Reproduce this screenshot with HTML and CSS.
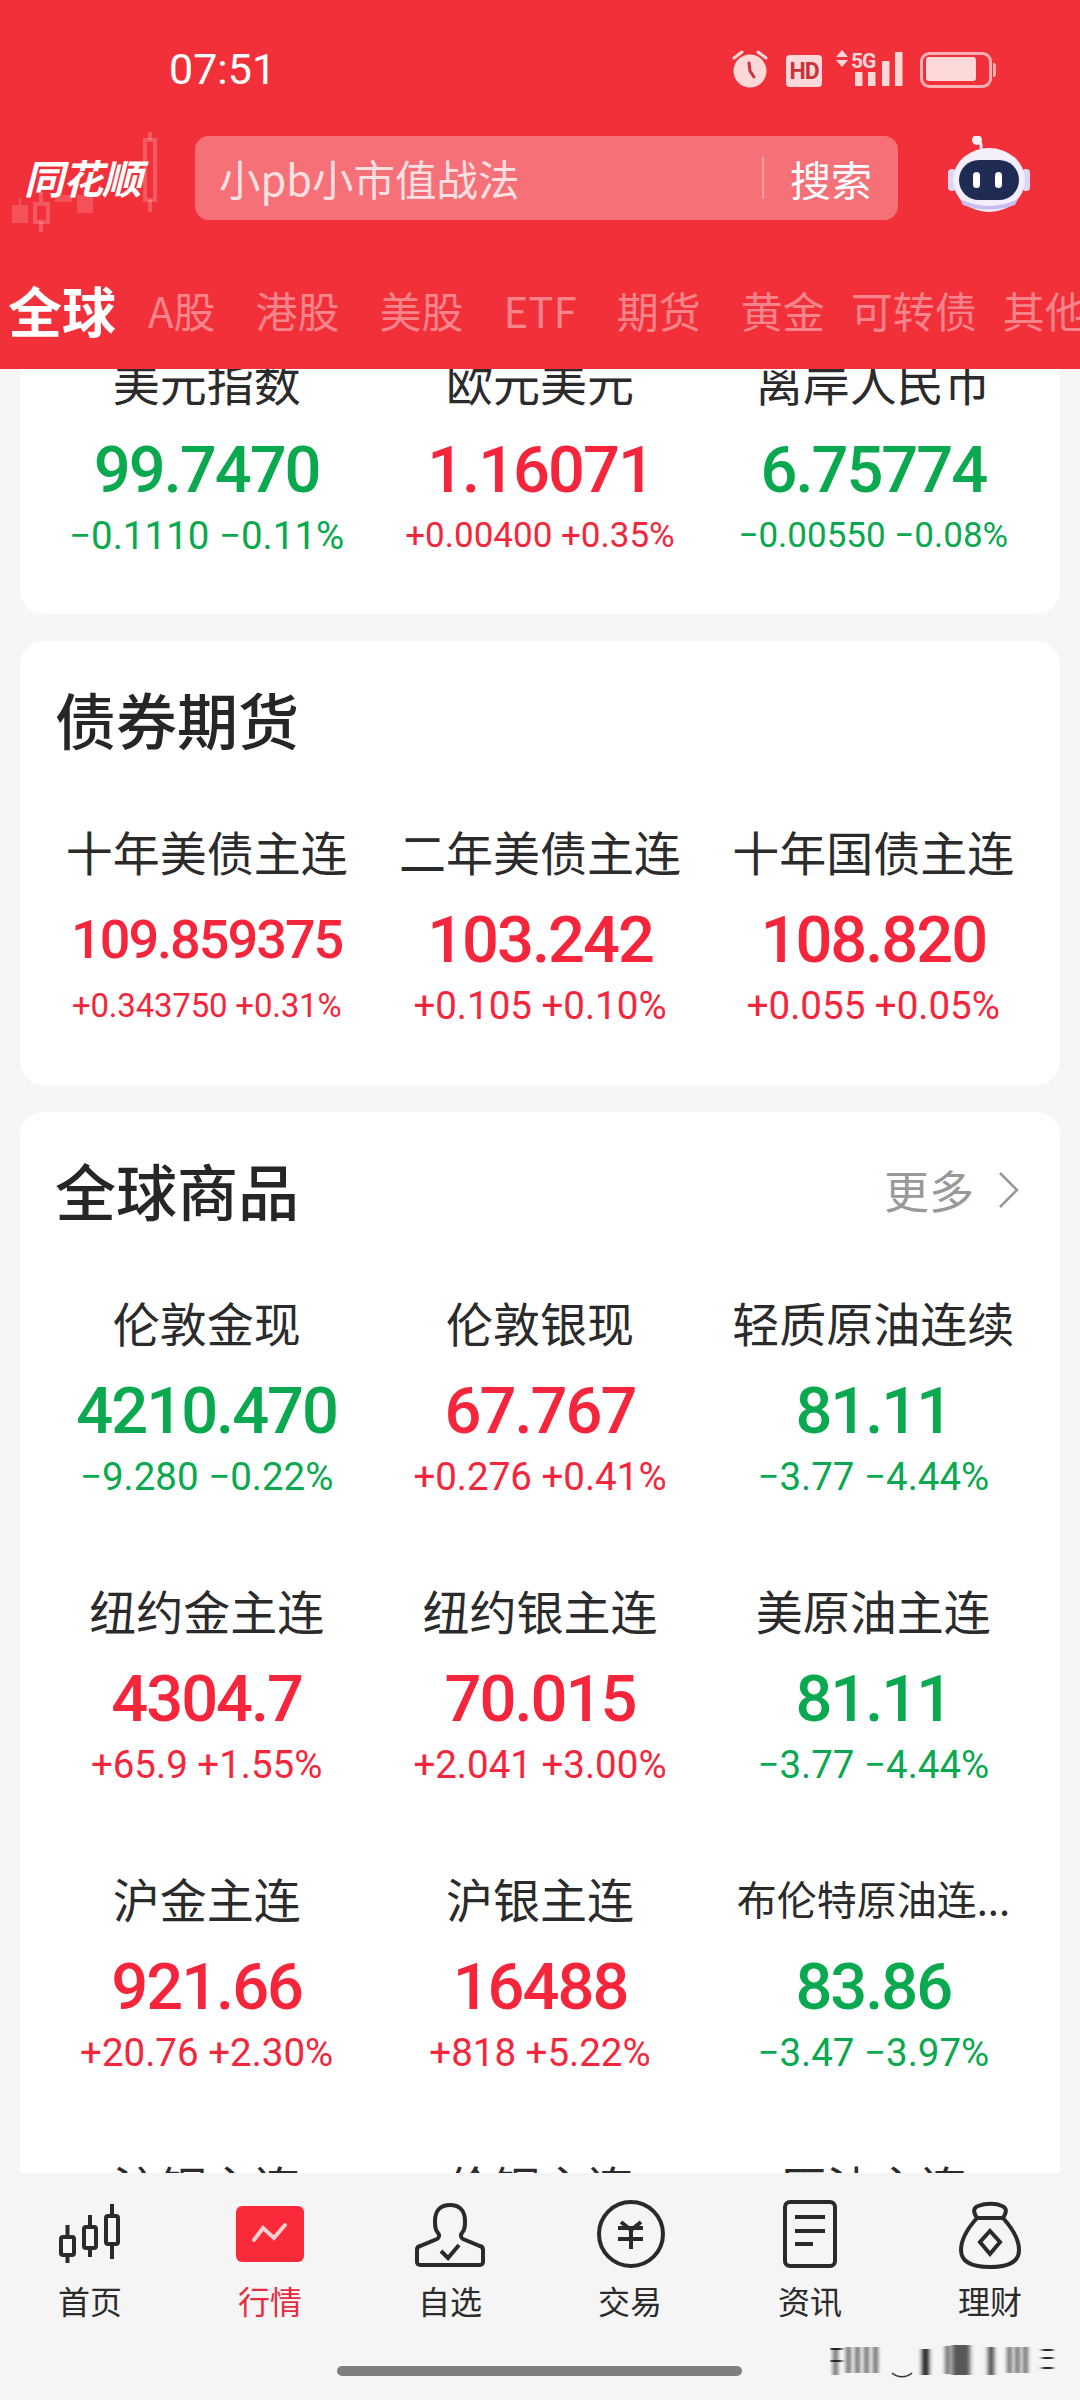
FILE: index.html
```html
<!DOCTYPE html>
<html lang="zh-CN">
<head>
<meta charset="utf-8">
<title>行情</title>
<link rel="stylesheet" href="styles.css">
</head>
<body>
<div class="app">
  <header class="header">
    <div class="status">
      <span class="time">07:51</span>
      <svg class="status-icons" viewBox="732 48 266 42" width="266" height="42">
        <g fill="none" stroke="#fdd8d8" stroke-width="3" stroke-linecap="round"><path d="M734 58l8-6M766 58l-8-6"/></g>
        <circle cx="750" cy="71" r="16.5" fill="#fdd8d8"/>
        <path d="M749 63l1 8 4 6" fill="none" stroke="#c9333b" stroke-width="3" stroke-linecap="round"/>
        <rect x="786" y="55" width="36" height="32" rx="4" fill="#fdd8d8"/>
        <text x="804" y="79" class="hd">HD</text>
        <path d="M842 50l6 7h-12zM842 67l6-7h-12z" fill="#fdd8d8"/>
        <text x="851" y="68" class="fiveg">5G</text>
        <g fill="#fdd8d8"><rect x="855" y="72" width="7.5" height="14" rx="1"/><rect x="868" y="72" width="7.5" height="14" rx="1"/><rect x="882" y="61" width="7.5" height="25" rx="1"/><rect x="895" y="52" width="7.5" height="34" rx="1"/></g>
        <rect x="921.5" y="53.5" width="69" height="33" rx="8" fill="none" stroke="#fbb0b4" stroke-width="3"/>
        <rect x="926" y="57" width="50" height="24" rx="3" fill="#fdd8d8"/>
        <path d="M993 63a3 3 0 0 1 3 3v8a3 3 0 0 1-3 3z" fill="#fbb0b4"/>
      </svg>
    </div>
    <div class="searchrow">
      <div class="logo">
        <svg class="logo-bg" viewBox="0 0 170 110" width="170" height="110">
          <g fill="#fff" fill-opacity=".16"><rect x="12" y="75" width="16" height="18"/><rect x="55" y="65" width="17" height="7"/><rect x="77" y="65" width="16" height="18"/><rect x="19" y="68" width="2" height="8"/></g>
          <g fill="none" stroke="#fff" stroke-opacity=".2" stroke-width="4"><rect x="35" y="74" width="13" height="18"/><path d="M41 62v10M41 92v10"/><rect x="145" y="10" width="10" height="60"/><path d="M150 2v8M150 70v12"/></g>
        </svg>
        <span class="logo-text">同花顺</span>
      </div>
      <div class="search">
        <span class="search-hint">小pb小市值战法</span>
        <span class="search-btn">搜索</span>
      </div>
      <svg class="robot" viewBox="945 137 90 84" width="90" height="84">
        <path d="M981 150c1-5-1-8-5-9" fill="none" stroke="#f0e8f4" stroke-width="3"/>
        <circle cx="977" cy="141" r="5" fill="#f6eef6"/>
        <rect x="948" y="170" width="8" height="22" rx="4" fill="#dcd6f2"/>
        <rect x="1022" y="170" width="8" height="22" rx="4" fill="#dcd6f2"/>
        <ellipse cx="989" cy="181" rx="36" ry="32" fill="#f2eefa"/>
        <path d="M960 200q29 14 58 0l-3 6q-26 9-52 0z" fill="#c9bdf0"/>
        <rect x="959" y="161" width="60" height="40" rx="20" fill="#1f2b52"/>
        <rect x="973" y="173" width="7" height="16" rx="3.5" fill="#fff"/>
        <rect x="995" y="173" width="7" height="16" rx="3.5" fill="#fff"/>
      </svg>
    </div>
    <nav class="tabs">
      <span class="tab tab--on">全球</span>
      <span class="tab">A股</span>
      <span class="tab">港股</span>
      <span class="tab">美股</span>
      <span class="tab">ETF</span>
      <span class="tab">期货</span>
      <span class="tab">黄金</span>
      <span class="tab tab--tight">可转债</span>
      <span class="tab tab--tight">其他</span>
    </nav>
  </header>

  <main class="main">
    <section class="card card--first">
      <div class="grid">
        <div class="cell"><div class="name">美元指数</div><div class="val down">99.7470</div><div class="chg down">−0.1110 −0.11%</div></div>
        <div class="cell"><div class="name">欧元美元</div><div class="val up">1.16071</div><div class="chg chg--md up">+0.00400 +0.35%</div></div>
        <div class="cell"><div class="name">离岸人民币</div><div class="val down">6.75774</div><div class="chg chg--md down">−0.00550 −0.08%</div></div>
      </div>
    </section>

    <section class="card">
      <div class="head"><h2 class="title">债券期货</h2></div>
      <div class="grid">
        <div class="cell"><div class="name">十年美债主连</div><div class="val val--sm up">109.859375</div><div class="chg chg--sm up">+0.343750 +0.31%</div></div>
        <div class="cell"><div class="name">二年美债主连</div><div class="val up">103.242</div><div class="chg up">+0.105 +0.10%</div></div>
        <div class="cell"><div class="name">十年国债主连</div><div class="val up">108.820</div><div class="chg up">+0.055 +0.05%</div></div>
      </div>
    </section>

    <section class="card">
      <div class="head">
        <h2 class="title">全球商品</h2>
        <span class="more">更多<svg class="chev" viewBox="0 0 22 38" width="22" height="38"><path d="M2 2l17 17L2 36" fill="none" stroke="#999" stroke-width="2.6"/></svg></span>
      </div>
      <div class="grid">
        <div class="cell"><div class="name">伦敦金现</div><div class="val down">4210.470</div><div class="chg down">−9.280 −0.22%</div></div>
        <div class="cell"><div class="name">伦敦银现</div><div class="val up">67.767</div><div class="chg up">+0.276 +0.41%</div></div>
        <div class="cell"><div class="name">轻质原油连续</div><div class="val down">81.11</div><div class="chg down">−3.77 −4.44%</div></div>
        <div class="cell"><div class="name">纽约金主连</div><div class="val up">4304.7</div><div class="chg up">+65.9 +1.55%</div></div>
        <div class="cell"><div class="name">纽约银主连</div><div class="val up">70.015</div><div class="chg up">+2.041 +3.00%</div></div>
        <div class="cell"><div class="name">美原油主连</div><div class="val down">81.11</div><div class="chg down">−3.77 −4.44%</div></div>
        <div class="cell"><div class="name">沪金主连</div><div class="val up">921.66</div><div class="chg up">+20.76 +2.30%</div></div>
        <div class="cell"><div class="name">沪银主连</div><div class="val up">16488</div><div class="chg up">+818 +5.22%</div></div>
        <div class="cell"><div class="name name--sm">布伦特原油连...</div><div class="val down">83.86</div><div class="chg down">−3.47 −3.97%</div></div>
        <div class="cell"><div class="name">沪铜主连</div></div>
        <div class="cell"><div class="name">伦铜主连</div></div>
        <div class="cell"><div class="name">原油主连</div></div>
      </div>
    </section>
  </main>

  <footer class="nav">
    <div class="nav-item">
      <svg class="nav-icon" viewBox="0 0 80 72" width="80" height="72"><g fill="none" stroke="#2a2a2a" stroke-width="4"><rect x="11" y="37" width="13" height="18" rx="2"/><path d="M17.5 25v12M17.5 55v8"/><rect x="34" y="27" width="12" height="21" rx="2"/><path d="M40 15v12M40 48v9"/><rect x="56" y="16" width="12" height="28" rx="2"/><path d="M62 4v12M62 44v15"/></g></svg>
      <span class="nav-label">首页</span>
    </div>
    <div class="nav-item nav-item--on">
      <svg class="nav-icon" viewBox="0 0 80 72" width="80" height="72"><rect x="6" y="6" width="68" height="56" rx="6" fill="#fb2a3b"/><path d="M24 40l9-12 11 10 11-13" fill="none" stroke="#fbd0d0" stroke-width="4" stroke-linecap="round"/></svg>
      <span class="nav-label">行情</span>
    </div>
    <div class="nav-item">
      <svg class="nav-icon" viewBox="0 0 80 72" width="80" height="72"><path d="M10 65H70a3 3 0 0 0 3-3V50a4 4 0 0 0-3-4L53 39c-2-1-3-4-1-6c3-3 3-7 3-12C55 10 49 5 40 5S25 10 25 21c0 5 0 9 3 12c2 2 1 5-1 6L10 46a4 4 0 0 0-3 4V62a3 3 0 0 0 3 3Z" fill="none" stroke="#2a2a2a" stroke-width="4"/><path d="M31 51l7 7 11-13" fill="none" stroke="#2a2a2a" stroke-width="4"/></svg>
      <span class="nav-label">自选</span>
    </div>
    <div class="nav-item">
      <svg class="nav-icon" viewBox="0 0 80 72" width="80" height="72"><circle cx="41" cy="34" r="32" fill="none" stroke="#2a2a2a" stroke-width="4"/><path d="M31 22l10 8 10-8M28 28h25M28 39h25M41 30v19" fill="none" stroke="#2a2a2a" stroke-width="4"/></svg>
      <span class="nav-label">交易</span>
    </div>
    <div class="nav-item">
      <svg class="nav-icon" viewBox="0 0 80 72" width="80" height="72"><rect x="15" y="2" width="50" height="64" rx="5" fill="none" stroke="#2a2a2a" stroke-width="4"/><path d="M25 17h30M25 31h30M25 44h18" fill="none" stroke="#2a2a2a" stroke-width="4"/></svg>
      <span class="nav-label">资讯</span>
    </div>
    <div class="nav-item">
      <svg class="nav-icon" viewBox="0 0 80 72" width="80" height="72"><path d="M27 18C18 28 11 38 11 50C11 62 22 67 40 67S69 62 69 50C69 38 62 28 53 18ZM27 18C23 12 23 8 28 6C36 3 46 3 52 6C57 8 57 12 53 18" fill="none" stroke="#2a2a2a" stroke-width="4"/><path d="M40 31l10 11-10 12-10-12z" fill="none" stroke="#2a2a2a" stroke-width="4"/></svg>
      <span class="nav-label">理财</span>
    </div>
    <div class="homebar"></div>
    <svg class="mark" viewBox="0 0 225 36" width="225" height="36">
      <defs><filter id="smear" x="-5%" y="-5%" width="110%" height="110%"><feGaussianBlur stdDeviation="2 .5"/></filter></defs>
      <g fill="#222" filter="url(#smear)">
        <rect x="0" y="5" width="12" height="2"/><rect x="0" y="17" width="12" height="2"/><rect x="4" y="6" width="3" height="26"/>
        <rect x="17" y="4" width="3" height="26"/><rect x="26" y="4" width="3" height="26"/><rect x="35" y="4" width="3" height="26"/><rect x="44" y="4" width="3" height="26"/>
        <rect x="92" y="6" width="7" height="26"/><rect x="116" y="3" width="3" height="28"/>
        <rect x="122" y="2" width="18" height="30" opacity=".75"/><rect x="158" y="4" width="6" height="28" opacity=".8"/>
        <rect x="178" y="4" width="3" height="26"/><rect x="186" y="4" width="3" height="26"/><rect x="194" y="4" width="3" height="26"/>
        <rect x="212" y="6" width="11" height="2"/><rect x="212" y="14" width="11" height="2"/><rect x="212" y="24" width="11" height="2"/>
      </g>
      <path d="M62 30c6 5 14 5 20 0" fill="none" stroke="#333" stroke-width="1.6"/>
    </svg>
  </footer>
</div>
</body>
</html>
```
FILE: styles.css
```css
* { box-sizing: border-box; margin: 0; padding: 0; }
html, body { width: 1080px; height: 2400px; overflow: hidden; }
body { font-family: "Noto Sans CJK SC", "Noto Sans", sans-serif; background: #f6f6f6; color: #2b2b2b; }
.app { width: 1080px; height: 2400px; display: flex; flex-direction: column; }

.header { height: 369px; background: #f2303a; flex: none; color: #fff; }
.status { height: 136px; display: flex; justify-content: space-between; align-items: flex-start; padding: 49px 82px 0 169px; }
.status-icons { margin-top: -1px; }
.time { font-family: Roboto, sans-serif; font-size: 43px; line-height: 40px; color: #fff; }
.hd { font-family: Roboto, sans-serif; font-size: 23px; font-weight: 700; fill: #c9333b; text-anchor: middle; letter-spacing: -1px; }
.fiveg { font-family: Roboto, sans-serif; font-size: 21px; font-weight: 700; fill: #fdd8d8; letter-spacing: -1px; }

.searchrow { height: 84px; display: flex; align-items: stretch; }
.logo { width: 195px; position: relative; display: flex; align-items: center; padding: 0 0 2px 24px; }
.logo-bg { position: absolute; left: 0; top: -6px; }
.logo-text { position: relative; font-size: 40px; font-weight: 700; font-style: italic; line-height: 44px; letter-spacing: -1px; color: #fff; }
.search { width: 703px; background: #f67078; border-radius: 14px; display: flex; justify-content: space-between; align-items: center; padding: 0 26px 0 24px; }
.search-hint { font-size: 41.5px; color: #fde0e2; line-height: 60px; }
.search-btn { font-size: 41px; color: #fff; line-height: 42px; padding-left: 26px; border-left: 2px solid #fa9ca2; }
.robot { margin-left: 47px; }

.tabs { height: 149px; display: flex; align-items: center; gap: 40px; padding: 31px 0 0 8px; overflow: hidden; white-space: nowrap; }
.tab { font-size: 42px; line-height: 60px; color: rgba(255, 255, 255, .42); flex: none; }
.tab--on { font-size: 54px; font-weight: 700; color: #fff; margin-right: -8px; }
.tab--tight { margin-left: -14px; }

.main { flex: 1; min-height: 0; overflow: hidden; padding: 0 20px; display: flex; flex-direction: column; gap: 27px; }
.card { flex: none; background: #fff; border-radius: 24px; padding: 0 20px 57px; }
.card--first { margin-top: -16px; padding-bottom: 56px; }
.head { display: flex; justify-content: space-between; align-items: center; height: 60px; margin: 48px 0 74px; padding: 0 15px; }
.title { font-size: 61px; font-weight: 500; line-height: 60px; color: #262626; }
.more { font-size: 45px; line-height: 60px; color: #999; display: flex; align-items: center; gap: 24px; margin-right: 5px; }

.grid { display: grid; grid-template-columns: repeat(3, 1fr); row-gap: 83px; }
.cell { display: flex; flex-direction: column; align-items: center; white-space: nowrap; }
.name { font-size: 47px; line-height: 56px; color: #2b2b2b; }
.name--sm { font-size: 40px; }
.val { font-family: Roboto, sans-serif; font-weight: 500; font-size: 65px; line-height: 72px; letter-spacing: -2px; margin-top: 25px; }
.val--sm { font-size: 54px; }
.chg { font-family: Roboto, sans-serif; font-size: 38.5px; line-height: 44px; margin-top: 8px; }
.chg--md { font-size: 35px; }
.chg--sm { font-size: 33px; letter-spacing: -.2px; }
.up { color: #f5263c; }
.down { color: #0aa84f; }

.nav { height: 227px; flex: none; background: #f5f5f5; display: flex; padding-top: 27px; position: relative; }
.nav-item { width: 180px; display: flex; flex-direction: column; align-items: center; }
.nav-icon { display: block; }
.nav-label { font-size: 32px; line-height: 44px; margin-top: 6px; color: #2b2b2b; }
.nav-item--on .nav-label { color: #e62c40; }
.homebar { position: absolute; left: 337px; top: 193px; width: 405px; height: 10px; border-radius: 5px; background: #7f7f7f; }
.mark { position: absolute; left: 830px; top: 170px; }
```
